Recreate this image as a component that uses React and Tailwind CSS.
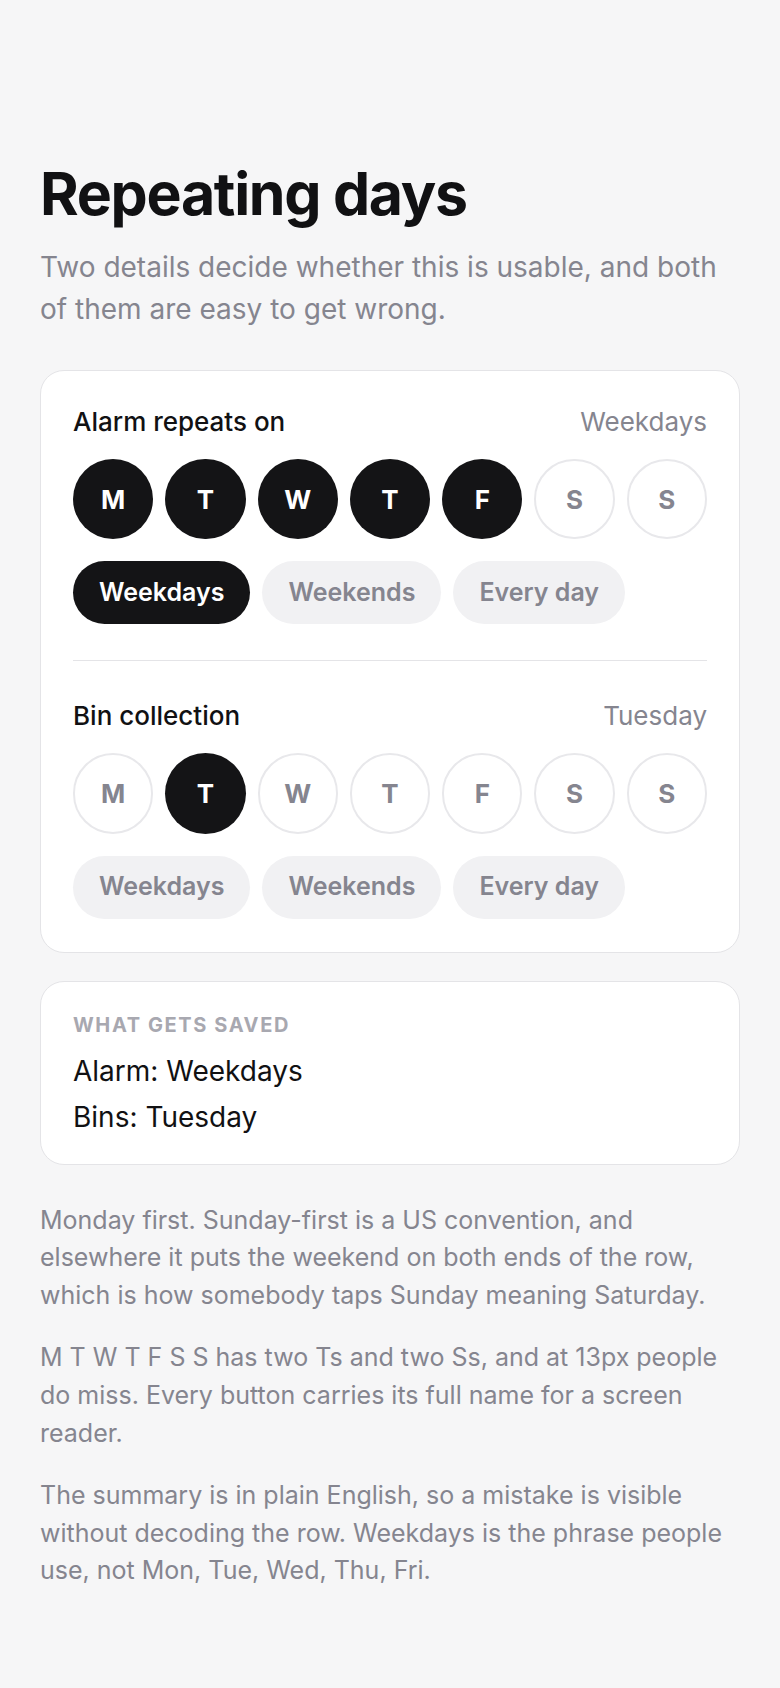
import { useState } from 'react';

const DAYS = [
  { short: 'M', name: 'Monday' },
  { short: 'T', name: 'Tuesday' },
  { short: 'W', name: 'Wednesday' },
  { short: 'T', name: 'Thursday' },
  { short: 'F', name: 'Friday' },
  { short: 'S', name: 'Saturday' },
  { short: 'S', name: 'Sunday' },
];

const PRESETS = [
  { label: 'Weekdays', days: [0, 1, 2, 3, 4] },
  { label: 'Weekends', days: [5, 6] },
  { label: 'Every day', days: [0, 1, 2, 3, 4, 5, 6] },
];

const same = (a, b) => a.length === b.length && a.every((d) => b.includes(d));

function describe(days) {
  const sorted = [...days].sort();
  const preset = PRESETS.find((p) => same(p.days, sorted));
  if (preset) return preset.label;
  if (sorted.length === 0) return 'Never';
  return sorted.map((d) => DAYS[d].name).join(', ');
}

function DayPicker({ title, days, onChange, withDivider }) {
  const toggle = (i) =>
    onChange(days.includes(i) ? days.filter((d) => d !== i) : [...days, i]);

  return (
    <div className={withDivider ? 'border-t border-[#e4e4e7] pt-9' : ''}>
      <div className="flex items-center justify-between h-9">
        <span className="text-[26px] font-medium text-[#111113]">{title}</span>
        <span className="text-[26px] text-[#85858f]">{describe(days)}</span>
      </div>

      <div className="mt-5 grid grid-cols-7 gap-3">
        {DAYS.map((d, i) => {
          const on = days.includes(i);
          return (
            <button key={d.name} type="button" aria-label={d.name} aria-pressed={on} onClick={() => toggle(i)}
              className={`aspect-square rounded-full flex items-center justify-center text-[26px] font-bold ${
                on ? 'bg-[#141416] text-white' : 'bg-white border-2 border-[#e8e8eb] text-[#85858f]'
              }`}>
              {d.short}
            </button>
          );
        })}
      </div>

      <div className="mt-[22px] flex gap-3">
        {PRESETS.map((p) => {
          const on = same(p.days, [...days].sort());
          return (
            <button key={p.label} type="button" onClick={() => onChange(p.days)}
              className={`h-[63px] px-[26px] rounded-full text-[25px] font-semibold ${
                on ? 'bg-[#141416] text-white' : 'bg-[#f1f1f3] text-[#85858f]'
              }`}>
              {p.label}
            </button>
          );
        })}
      </div>
    </div>
  );
}

export default function App() {
  const [alarm, setAlarm] = useState([0, 1, 2, 3, 4]);
  const [bins, setBins] = useState([1]);

  return (
    <div className="min-h-screen bg-[#f6f6f7] px-10 pt-[162px] pb-24 font-['Inter',sans-serif]">
      <h1 className="text-[59px] leading-[64px] font-bold tracking-[-0.022em] text-[#111113]">Repeating days</h1>
      <p className="mt-5 text-[28px] leading-[42px] text-[#85858f]">
        Two details decide whether this is usable, and both of them are easy to get wrong.
      </p>

      <div className="mt-10 bg-white border border-[#e4e4e7] rounded-[24px] px-8 pt-8 pb-[33px]">
        <div className="pb-9">
          <DayPicker title="Alarm repeats on" days={alarm} onChange={setAlarm} />
        </div>
        <DayPicker title="Bin collection" days={bins} onChange={setBins} withDivider />
      </div>

      <div className="mt-[28px] bg-white border border-[#e4e4e7] rounded-[24px] px-8 pt-8 pb-[29px]">
        <div className="text-[20px] leading-[22px] font-bold tracking-[0.08em] text-[#a8a8b0]">WHAT GETS SAVED</div>
        <div className="mt-[17px] text-[28px] leading-9 text-[#111113]">Alarm: {describe(alarm)}</div>
        <div className="mt-[10px] text-[28px] leading-9 text-[#111113]">Bins: {describe(bins)}</div>
      </div>

      <div className="mt-[37px] flex flex-col gap-[25px] text-[25px] leading-[37.6px] text-[#85858f]">
        <p>
          Monday first. Sunday-first is a US convention, and elsewhere it puts the weekend on both ends of the row,
          which is how somebody taps Sunday meaning Saturday.
        </p>
        <p>
          M T W T F S S has two Ts and two Ss, and at 13px people do miss. Every button carries its full name for a
          screen reader.
        </p>
        <p>
          The summary is in plain English, so a mistake is visible without decoding the row. Weekdays is the phrase
          people use, not Mon, Tue, Wed, Thu, Fri.
        </p>
      </div>
    </div>
  );
}
